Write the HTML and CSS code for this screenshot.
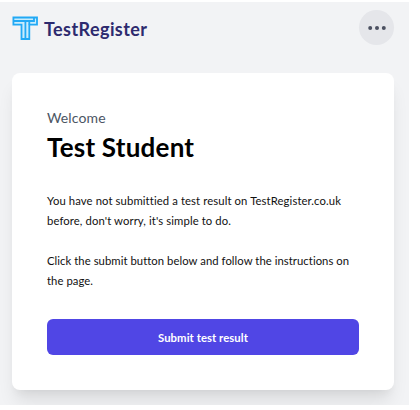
FILE: index.html
```html
<!DOCTYPE html>
<html lang="en">
<head>
    <meta charset="UTF-8">
    <meta name="viewport" content="width=device-width, initial-scale=1.0">
    <title>TestRegister</title>
    <link rel="stylesheet" href="styles.css">
</head>
<body>
<div class="page">
    <header class="topbar">
        <a class="brand" href="#">
            <svg class="logo" width="27" height="25" viewBox="0 0 27 25" fill="#c9ecfc" stroke="#22a9f5" stroke-width="1.8">
                <path d="M1.4 1.5H25V8.6H17.3V23H9.5V8.6H1.4Z"/>
                <path fill="none" d="M1.4 5H13.4V23M13.4 5H22V1.5M17.3 8.6V5"/>
            </svg>
            <span class="brand-name">TestRegister</span>
        </a>
        <button class="menu" aria-label="Menu">
            <svg width="20" height="6" viewBox="0 0 20 6" fill="#4b5060">
                <circle cx="3.2" cy="3" r="2"/>
                <circle cx="10" cy="3" r="2"/>
                <circle cx="16.8" cy="3" r="2"/>
            </svg>
        </button>
    </header>

    <main class="card">
        <p class="welcome">Welcome</p>
        <h1>Test Student</h1>
        <p class="text">You have not submittied a test result on TestRegister.co.uk<br>before, don't worry, it's simple to do.</p>
        <p class="text last">Click the submit button below and follow the instructions on<br>the page.</p>
        <button class="submit">Submit test result</button>
    </main>
</div>
</body>
</html>
```
FILE: styles.css
```css
body{
    margin: 0;
    padding-top: 2px;
    background-color: #fff;
    font-family: Lato, sans-serif;
    color: #111;
}

.page{
    box-sizing: border-box;
    width: 409px;
    height: 403px;
    padding: 8px 15px 0 12px;
    background-color: #f2f3f5;
    overflow: hidden;
}

.topbar{
    display: flex;
    justify-content: space-between;
    height: 63px;
}

.brand{
    display: flex;
    height: 37px;
    align-items: center;
    text-decoration: none;
}

.brand-name{
    margin-left: 5px;
    padding-top: 1px;
    font-size: 18px;
    font-weight: 700;
    line-height: 24px;
    letter-spacing: .42px;
    color: #2d2a6e;
}

.menu{
    display: flex;
    width: 35px;
    height: 35px;
    padding: 0;
    align-items: center;
    justify-content: center;
    border: 0;
    border-radius: 50%;
    background-color: #e5e6ea;
}

.card{
    box-sizing: border-box;
    height: 317px;
    padding: 35px;
    border-radius: 8px;
    background-color: #fff;
    box-shadow: 0 14px 18px -4px rgba(0,0,0,.1), 0 6px 8px -4px rgba(0,0,0,.05);
}

.welcome{
    margin: 0;
    font-size: 14px;
    line-height: 20px;
    letter-spacing: .12px;
    color: #4b5563;
}

h1{
    margin: 4px 0 29px;
    font-size: 26px;
    line-height: 30px;
    letter-spacing: .22px;
    color: #000;
}

.text{
    margin: 0 0 20px;
    font-size: 11.3px;
    line-height: 20px;
    letter-spacing: .1px;
    white-space: nowrap;
}

.last{
    letter-spacing: .05px;
}

.submit{
    display: block;
    width: 100%;
    height: 36px;
    margin-top: 28px;
    padding: 0;
    border: 0;
    border-radius: 6px;
    background-color: #5046e5;
    font-family: inherit;
    font-size: 11.3px;
    font-weight: 700;
    letter-spacing: .07px;
    color: #fff;
}
```
